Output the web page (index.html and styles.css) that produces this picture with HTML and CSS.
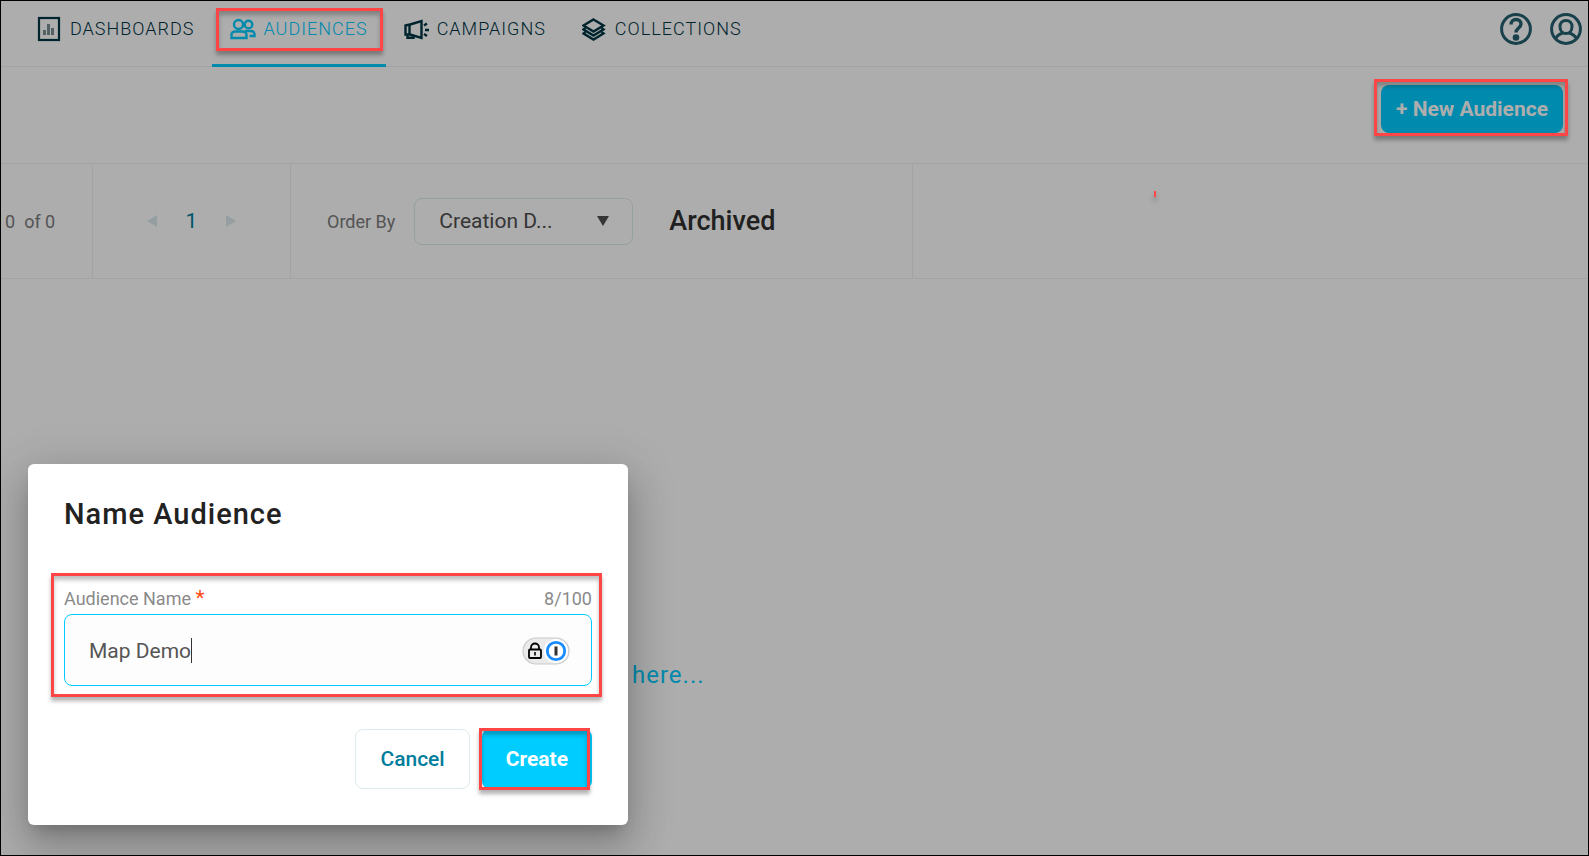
FILE: index.html
```html
<!DOCTYPE html>
<html lang="en">
<head>
    <meta charset="UTF-8">
    <meta name="viewport" content="width=device-width, initial-scale=1.0">
    <title>Audiences</title>
    <link rel="stylesheet" href="styles.css">
</head>
<body>

<div class="app">
    <header class="navbar">
        <nav class="tabs">
            <a class="tab" href="#">
                <svg class="tab-icon" viewBox="0 0 26 26">
                    <rect x="2" y="2" width="20" height="22" fill="none" stroke="currentColor" stroke-width="2.200"/>
                    <path d="M6 14h3v5H6zM10 8h3v11h-3zM14 12h3v7h-3z" fill="#7b8f95"/>
                </svg>
                DASHBOARDS
            </a>
            <a class="tab active" href="#">
                <svg class="tab-icon" viewBox="0 0 26 26" fill="none" stroke="currentColor" stroke-width="2.400">
                    <circle cx="8.500" cy="8.500" r="4.500"/>
                    <circle cx="18.500" cy="8.500" r="3.800"/>
                    <path d="M1.500 22v-3c0-2.500 2-3.500 4-3.500h7c2.500 0 4 1.500 4 3.500v3z"/>
                    <path d="M15 15h5.500c2.500 0 4 1.500 4 3.500V20h-5"/>
                </svg>
                AUDIENCES
                <span class="callout callout-tab"></span>
            </a>
            <a class="tab" href="#">
                <svg class="tab-icon" viewBox="0 0 26 26" fill="none" stroke="currentColor" stroke-width="2.400">
                    <path d="M1.500 9.500 6 8.500 17.500 5v17L6 18.500H1.500z"/>
                    <path d="M5.500 8.500V18M3.500 18v3.800h6V19"/>
                    <path d="M20 9.500l3-2M21 14h4M20 18l3 2"/>
                </svg>
                CAMPAIGNS
            </a>
            <a class="tab" href="#">
                <svg class="tab-icon" viewBox="0 0 26 26" fill="none" stroke="currentColor" stroke-width="2.400">
                    <path d="M11.500 3.500 21.500 9.500l-10 6-10-6z"/>
                    <path d="M3.500 12l-2 1.500 10 6 10-6-2-1.500"/>
                    <path d="M3.500 16l-2 1.500 10 6 10-6-2-1.500"/>
                </svg>
                COLLECTIONS
            </a>
        </nav>
        <div class="nav-actions">
            <button class="icon-btn" type="button" aria-label="Help">
                <svg viewBox="0 0 32 32" fill="none" stroke="currentColor" stroke-width="3.400">
                    <circle cx="16" cy="16" r="14.400" stroke-width="3"/>
                    <path d="M11 11.500c0-3 2-5 5-5s5 2 5 4.500c0 4-5 4-5 8.500"/>
                    <circle cx="16" cy="24.500" r="3.300" fill="currentColor" stroke="none"/>
                </svg>
            </button>
            <button class="icon-btn" type="button" aria-label="Account">
                <svg viewBox="0 0 32 32" fill="none" stroke="currentColor" stroke-width="3">
                    <circle cx="16" cy="16" r="14.400"/>
                    <path d="M16 7.500c-4 0-6 2.800-6 6 0 4 2.500 7 6 7s6-3 6-7c0-3.200-2-6-6-6z"/>
                    <path d="M5.500 25.500c1.500-3 4-4.500 7.500-5.500M26.500 25.500c-1.500-3-4-4.500-7.500-5.500"/>
                </svg>
            </button>
        </div>
    </header>

    <div class="page-head">
        <div class="new-wrap">
            <button class="btn btn-new" type="button">+ New Audience</button>
            <span class="callout callout-new"></span>
        </div>
    </div>

    <div class="toolbar">
        <div class="cell count"><span>0</span><span>of 0</span></div>
        <div class="cell pager">
            <button class="arrow" type="button" aria-label="Previous page">
                <svg viewBox="0 0 10 12"><path d="M10 0v12L0 6z"/></svg>
            </button>
            <a class="page-num" href="#">1</a>
            <button class="arrow" type="button" aria-label="Next page">
                <svg viewBox="0 0 10 12"><path d="M0 0v12l10-6z"/></svg>
            </button>
        </div>
        <div class="cell order">
            <label for="orderBy">Order By</label>
            <div class="select-wrap">
                <select id="orderBy">
                    <option>Creation D...</option>
                </select>
                <svg class="caret" viewBox="0 0 12 10"><path d="M0 0h12L6 10z"/></svg>
            </div>
            <button class="archived" type="button">Archived</button>
        </div>
        <div class="cell rest"></div>
        <span class="mark"></span>
    </div>

    <main class="content">
        <a class="here" href="#">here...</a>
    </main>

    <div class="backdrop"></div>

    <div class="dialog" role="dialog" aria-labelledby="dialogTitle">
        <h2 id="dialogTitle">Name Audience</h2>
        <form>
            <div class="field">
                <div class="field-head">
                    <label for="audienceName">Audience Name <span class="required">*</span></label>
                    <span>8/100</span>
                </div>
                <div class="input-wrap">
                    <input type="text" id="audienceName" value="Map Demo" maxlength="100">
                    <span class="cursor"></span>
                    <svg class="vault" viewBox="0 0 48 28">
                        <rect x="1" y="1" width="46" height="26" rx="13" fill="#ebebeb" stroke="#cacaca" stroke-width="1.200"/>
                        <circle cx="34" cy="14" r="12" fill="#fff"/>
                        <circle cx="34" cy="14" r="8.700" fill="#fff" stroke="#1a8cff" stroke-width="2.800"/>
                        <rect x="32.500" y="9.500" width="3" height="9" fill="#333"/>
                        <rect x="7" y="12.500" width="12" height="8.500" rx="1" fill="none" stroke="#000" stroke-width="1.800"/>
                        <path d="M9 12V10.500a4 4 0 0 1 8 0V12" fill="none" stroke="#000" stroke-width="1.800"/>
                        <path d="M13 15v3.500" stroke="#000" stroke-width="1.600"/>
                    </svg>
                </div>
                <span class="callout callout-field"></span>
            </div>
            <div class="dialog-actions">
                <button class="btn btn-cancel" type="button">Cancel</button>
                <div class="create-wrap">
                    <button class="btn btn-create" type="submit">Create</button>
                    <span class="callout callout-create"></span>
                </div>
            </div>
        </form>
    </div>
</div>

</body>
</html>
```
FILE: styles.css
```css
* {
    box-sizing: border-box;
}

body {
    margin: 0;
    font-family: Roboto, "Liberation Sans", sans-serif;
    font-size: 18px;
    color: #7d7d7d;
    background-color: #fff;
}

a {
    text-decoration: none;
}

button, input, select {
    font-family: inherit;
    margin: 0;
}

svg {
    display: block;
}

.app {
    position: relative;
    display: flex;
    flex-direction: column;
    min-height: 100vh;
    border: 1px solid #000;
    overflow: hidden;
}

/* top navigation */
.navbar {
    display: flex;
    justify-content: space-between;
    border-bottom: 1px solid #eff0f1;
    padding: 0 6px 0 18px;
}

.tabs {
    display: flex;
    margin-bottom: -1px;
}

.tab {
    position: relative;
    display: flex;
    align-items: center;
    gap: 7px;
    height: 66px;
    padding: 0 18px 8px;
    border-bottom: 3px solid transparent;
    font-weight: 300;
    color: #003544;
    letter-spacing: 1px;
}

.tab.active {
    color: #00ccff;
    border-bottom-color: #00ccff;
}

.tab-icon {
    width: 26px;
    height: 26px;
}

.nav-actions {
    display: flex;
    align-items: center;
    gap: 18px;
    height: 56px;
}

.icon-btn {
    width: 32px;
    height: 32px;
    padding: 0;
    border: none;
    background: none;
    color: #266171;
    cursor: pointer;
}

.btn {
    border: none;
    border-radius: 8px;
    cursor: pointer;
}

.page-head {
    display: flex;
    justify-content: flex-end;
    padding: 18px 25px 30px;
    border-bottom: 1px solid #eff0f1;
}

.new-wrap, .create-wrap {
    position: relative;
}

.btn-new {
    height: 48px;
    padding: 0 15px;
    font-size: 21px;
    font-weight: 700;
    color: #fff;
    background-color: #00ccff;
}

/* paging and sorting */
.toolbar {
    position: relative;
    display: flex;
    height: 115px;
    border-bottom: 1px solid #eff0f1;
}

.cell {
    display: flex;
    align-items: center;
    border-right: 1px solid #eff0f1;
}

.count {
    width: 92px;
    padding-left: 4px;
    gap: 9px;
}

.pager {
    width: 198px;
    justify-content: center;
    gap: 29px;
}

.arrow {
    width: 10px;
    height: 12px;
    padding: 0;
    border: none;
    background: none;
}

.arrow svg {
    width: 10px;
    height: 12px;
    fill: #dcebee;
}

.page-num {
    font-size: 21px;
    color: #007d9c;
}

.order {
    width: 622px;
    padding-left: 36px;
}

.select-wrap {
    position: relative;
    margin: 0 36px 0 19px;
}

.select-wrap select {
    display: block;
    width: 219px;
    height: 47px;
    padding: 0 50px 0 24px;
    border: 1px solid #dcebee;
    border-radius: 8px;
    background: none;
    appearance: none;
    font-size: 21px;
    color: #4e4e4e;
}

.caret {
    position: absolute;
    top: 18px;
    right: 24px;
    width: 12px;
    height: 10px;
    fill: #4e4e4e;
}

.archived {
    padding: 0;
    border: none;
    background: none;
    font-size: 27px;
    font-weight: 500;
    color: #303030;
}

.rest {
    flex: 1;
    border-right: none;
}

.content {
    flex: 1;
    padding: 382px 24px 0 631px;
}

.here {
    font-size: 24px;
    letter-spacing: 1px;
    color: #00ccff;
}

.backdrop {
    position: absolute;
    inset: 0;
    z-index: 10;
    background-color: rgba(0, 0, 0, 0.32);
}

/* dialog */
.dialog {
    position: absolute;
    top: 463px;
    left: 27px;
    z-index: 20;
    width: 600px;
    padding: 32px 36px 36px;
    border-radius: 6px;
    background-color: #fff;
    box-shadow: 0 11px 15px -7px rgba(0, 0, 0, 0.2),
                0 24px 38px 3px rgba(0, 0, 0, 0.14),
                0 9px 46px 8px rgba(0, 0, 0, 0.12);
}

.dialog h2 {
    margin: 0 0 44px;
    font-size: 29px;
    line-height: 36px;
    font-weight: 500;
    letter-spacing: 1px;
    color: #222;
}

.field {
    position: relative;
}

.field-head {
    display: flex;
    justify-content: space-between;
    line-height: 30px;
    padding-top: 8px;
    color: #8a8a8a;
}

.required {
    font-size: 21px;
    line-height: 24px;
    color: #ff4a11;
}

.input-wrap {
    position: relative;
}

.input-wrap input {
    display: block;
    width: 100%;
    height: 72px;
    padding: 2px 72px 0 24px;
    border: 1px solid #00ccff;
    border-radius: 8px;
    outline: none;
    background-color: #fdfdfd;
    font-size: 21px;
    color: #555;
}

.cursor {
    position: absolute;
    top: 24px;
    left: 127px;
    width: 1px;
    height: 25px;
    background-color: #333;
}

.vault {
    position: absolute;
    top: 23px;
    right: 22px;
    width: 48px;
    height: 28px;
}

.dialog-actions {
    display: flex;
    justify-content: flex-end;
    gap: 12px;
    margin-top: 43px;
}

.dialog-actions .btn {
    height: 60px;
    padding: 0 24px;
    font-size: 21px;
}

.dialog-actions .btn-cancel {
    border: 1px solid #dcebee;
    background-color: #fff;
    font-weight: 500;
    color: #007d9c;
}

.dialog-actions .btn-create {
    background-color: #00ccff;
    font-weight: 700;
    color: #fff;
}

/* red highlight boxes */
.callout {
    position: absolute;
    z-index: 15;
    border: 3px solid #ff4545;
    box-shadow: 0 4px 4px rgba(0, 0, 0, 0.3), inset 0 4px 4px rgba(0, 0, 0, 0.25);
    pointer-events: none;
}

.callout-tab {
    inset: 7px 3px 13px 4px;
}

.callout-new {
    inset: -6px -5px -3px -7px;
}

.callout-field {
    inset: -3px -10px -11px -13px;
}

.callout-create {
    inset: -1px 2px -1px -3px;
}

.mark {
    position: absolute;
    top: 27px;
    left: 1153px;
    z-index: 15;
    width: 2px;
    height: 6px;
    background-color: #ff4545;
    box-shadow: 0 4px 5px rgba(0, 0, 0, 0.35);
}
```
